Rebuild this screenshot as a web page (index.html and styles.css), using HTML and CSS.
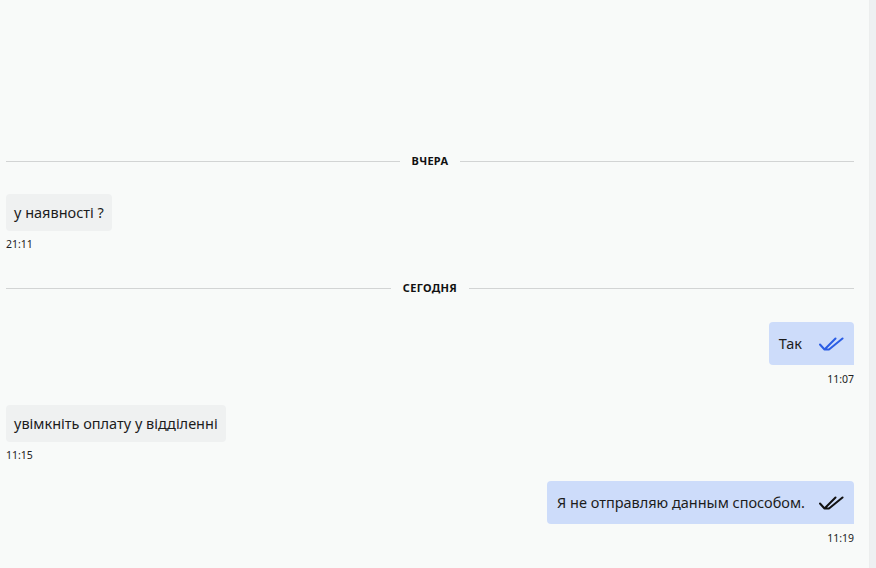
FILE: index.html
```html
<!DOCTYPE html>
<html lang="uk">
<head>
<meta charset="utf-8">
<link rel="stylesheet" href="styles.css">
</head>
<body>
<div class="app">
  <main class="chat">
    <div class="divider first"><span>ВЧЕРА</span></div>

    <div class="msg in after-divider">
      <div class="bubble">у наявності ?</div>
      <div class="time">21:11</div>
    </div>

    <div class="divider second"><span>СЕГОДНЯ</span></div>

    <div class="msg out after-divider">
      <div class="bubble short">
        <span>Так</span>
        <svg class="check blue" width="26" height="14" viewBox="0 0 26 14"><path d="M1 7.5 L5.5 12.5 L16.5 1.5 M10 12.5 L23.5 1.5 M5.5 12.5 L10 12.5" fill="none" stroke="currentColor" stroke-width="2" stroke-linecap="round" stroke-linejoin="round"/></svg>
      </div>
      <div class="time">11:07</div>
    </div>

    <div class="msg in">
      <div class="bubble">увімкніть оплату у відділенні</div>
      <div class="time">11:15</div>
    </div>

    <div class="msg out">
      <div class="bubble">
        <span>Я не отправляю данным способом.</span>
        <svg class="check dark" width="26" height="14" viewBox="0 0 26 14"><path d="M1 7.5 L5.5 12.5 L16.5 1.5 M10 12.5 L23.5 1.5 M5.5 12.5 L10 12.5" fill="none" stroke="currentColor" stroke-width="2" stroke-linecap="round" stroke-linejoin="round"/></svg>
      </div>
      <div class="time">11:19</div>
    </div>
  </main>
  <div class="scroll"></div>
</div>
</body>
</html>
```

FILE: styles.css
```css
* { box-sizing: border-box; }
html, body { margin: 0; padding: 0; }
body {
  background: #f8faf9;
  font-family: "Noto Sans", "Open Sans", sans-serif;
  color: #1c1c1c;
}
.app {
  display: flex;
  height: 568px;
}
.chat {
  flex: 1;
  display: flex;
  flex-direction: column;
  padding: 0 15px 0 6px;
  border-right: 1px solid #eceeee;
}
.scroll {
  width: 6px;
  background: #eef0f2;
}
.divider {
  display: flex;
  align-items: center;
  gap: 12px;
  height: 14px;
}
.divider.first { margin-top: 154px; }
.divider.second { margin-top: 30px; }
.divider::before, .divider::after {
  content: "";
  flex: 1;
  height: 1px;
  background: #d2d4d4;
}
.divider span {
  font-size: 11px;
  font-weight: 700;
  letter-spacing: 0.3px;
  color: #111;
  line-height: 14px;
}
.msg {
  display: flex;
  flex-direction: column;
  margin-top: 19px;
}
.msg.after-divider { margin-top: 26px; }
.msg.out.after-divider { margin-top: 27px; }
.msg.in { align-items: flex-start; }
.msg.out { align-items: flex-end; }
.bubble {
  font-size: 14.5px;
  line-height: 21px;
  border-radius: 4px;
}
.in .bubble {
  background: #eff1f1;
  padding: 8px 8px 8px 8px;
}
.out .bubble {
  background: #cddcfa;
  padding: 11px 9px 11px 10px;
  display: flex;
  align-items: center;
  gap: 14px;
  border-radius: 4px 4px 0 4px;
}
.out .bubble.short { gap: 17px; }
.check.blue { color: #2a5de4; }
.check.dark { color: #111; }
.time {
  font-size: 10.5px;
  line-height: 14px;
  margin-top: 6px;
  color: #222;
}
.out .time { margin-top: 7px; }
```
